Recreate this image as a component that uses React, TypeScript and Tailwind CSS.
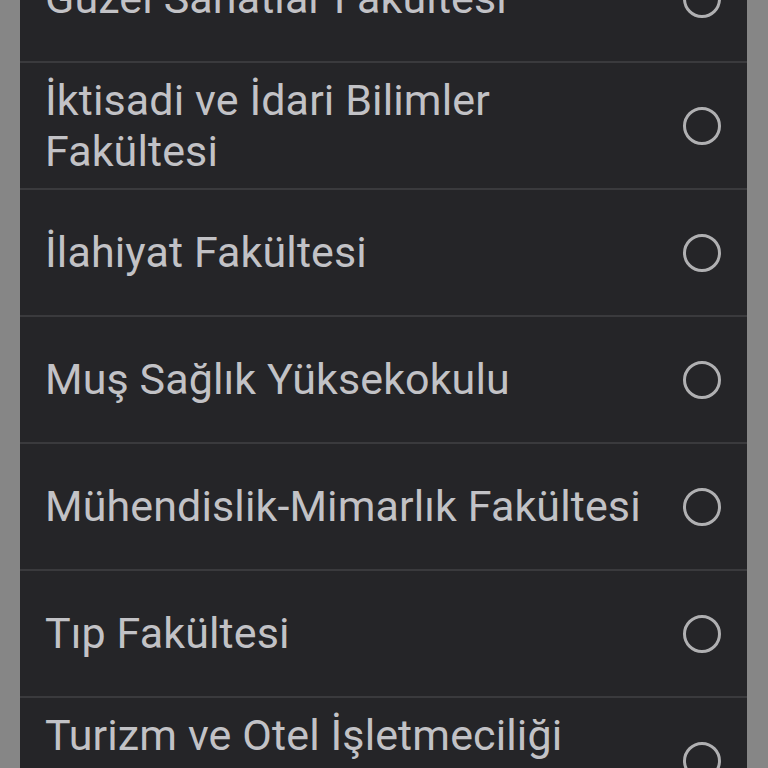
import React from "react";

const items: { label: string }[] = [
  { label: "Güzel Sanatlar Fakültesi" },
  { label: "İktisadi ve İdari Bilimler Fakültesi" },
  { label: "İlahiyat Fakültesi" },
  { label: "Muş Sağlık Yüksekokulu" },
  { label: "Mühendislik-Mimarlık Fakültesi" },
  { label: "Tıp Fakültesi" },
  { label: "Turizm ve Otel İşletmeciliği Yüksekokulu" },
];

export default function App() {
  return (
    <div
      className="h-[768px] w-[768px] overflow-hidden bg-[#868686] pl-[20px] pr-[21px]"
      style={{ fontFamily: "Roboto, 'Noto Sans', sans-serif" }}
    >
      <div className="-mt-[64px] bg-[#252528]">
        {items.map((it) => (
          <div
            key={it.label}
            className="flex h-[127px] items-center border-b-2 border-[#3a3a3d] pl-[25px] pr-[26px]"
          >
            <div className="flex-1 pr-[30px] text-[43px] leading-[51px] tracking-[0.12px] text-[#c2c2c6]">
              {it.label}
            </div>
            <div className="h-[38px] w-[38px] shrink-0 rounded-full border-[3px] border-[#b0b0b2]" />
          </div>
        ))}
      </div>
    </div>
  );
}
